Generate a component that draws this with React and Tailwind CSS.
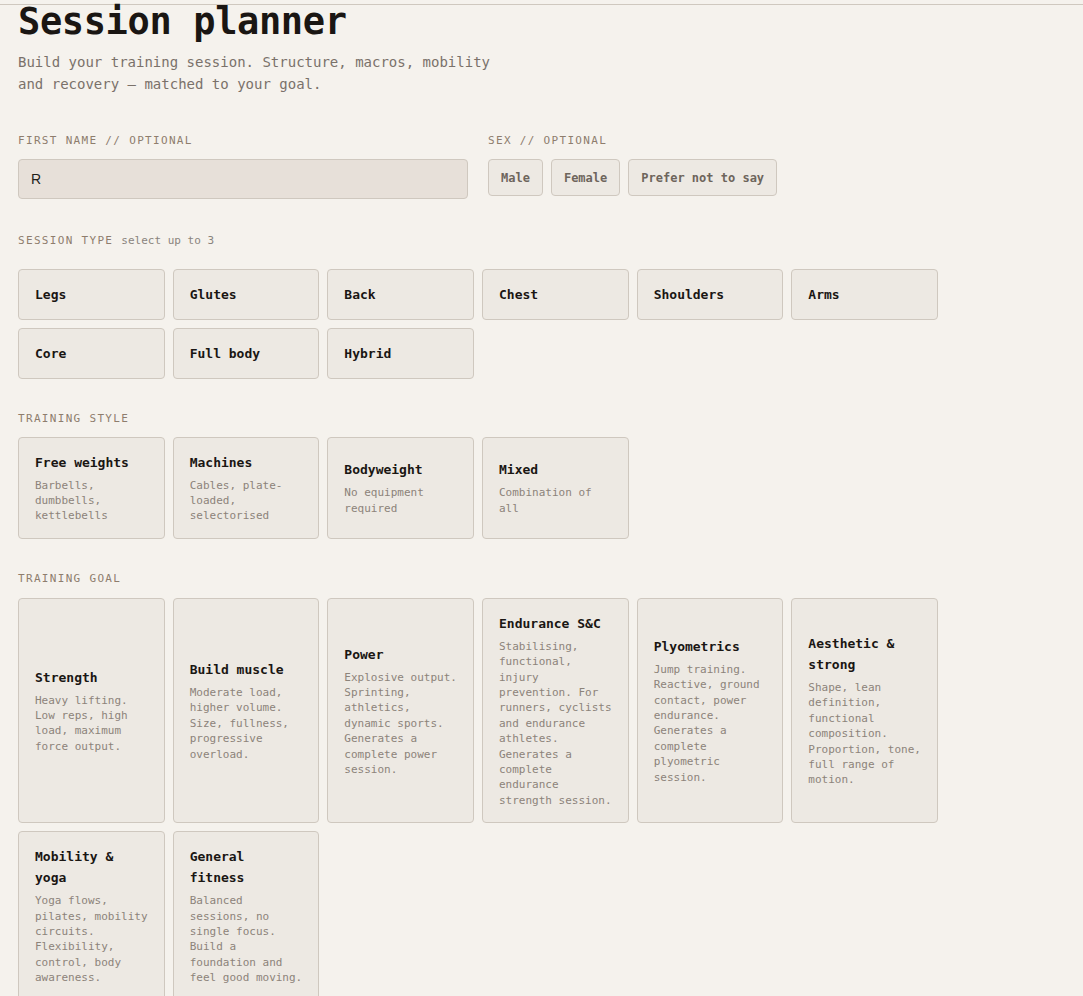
import { useState } from 'react';

const SESSION_TYPES = ['Legs', 'Glutes', 'Back', 'Chest', 'Shoulders', 'Arms', 'Core', 'Full body', 'Hybrid'];

const STYLES = [
  { name: 'Free weights', desc: 'Barbells, dumbbells, kettlebells' },
  { name: 'Machines', desc: 'Cables, plate-loaded, selectorised' },
  { name: 'Bodyweight', desc: 'No equipment required' },
  { name: 'Mixed', desc: 'Combination of all' },
];

const GOALS = [
  { name: 'Strength', desc: 'Heavy lifting. Low reps, high load, maximum force output.' },
  { name: 'Build muscle', desc: 'Moderate load, higher volume. Size, fullness, progressive overload.' },
  { name: 'Power', desc: 'Explosive output. Sprinting, athletics, dynamic sports. Generates a complete power session.' },
  { name: 'Endurance S&C', desc: 'Stabilising, functional, injury prevention. For runners, cyclists and endurance athletes. Generates a complete endurance strength session.' },
  { name: 'Plyometrics', desc: 'Jump training. Reactive, ground contact, power endurance. Generates a complete plyometric session.' },
  { name: 'Aesthetic & strong', desc: 'Shape, lean definition, functional composition. Proportion, tone, full range of motion.' },
  { name: 'Mobility & yoga', desc: 'Yoga flows, pilates, mobility circuits. Flexibility, control, body awareness.' },
  { name: 'General fitness', desc: 'Balanced sessions, no single focus. Build a foundation and feel good moving.' },
];

function Label({ children, className = '' }) {
  return (
    <div className={`text-[11px] leading-[15px] tracking-[0.12em] uppercase text-[#8e7d6d] ${className}`}>
      {children}
    </div>
  );
}

function OptionCard({ name, desc, onClick }) {
  return (
    <button
      onClick={onClick}
      className="min-h-[51px] flex flex-col justify-center text-left rounded-[4px] border border-[#cfc8bf] bg-[#ede9e3] px-4 py-[14px] hover:border-[#a89e92]"
    >
      <span className="text-[13px] leading-[21px] font-bold text-[#1a1613]">{name}</span>
      {desc && <span className="mt-[5px] text-[11px] leading-[15.4px] text-[#8c837a]">{desc}</span>}
    </button>
  );
}

export default function App() {
  const [name, setName] = useState('R');
  const [sex, setSex] = useState(null);
  const [types, setTypes] = useState([]);

  const toggleType = (t) =>
    setTypes((prev) => (prev.includes(t) ? prev.filter((x) => x !== t) : prev.length < 3 ? [...prev, t] : prev));

  return (
    <div className="min-h-screen bg-[#f5f2ed] font-['DejaVu_Sans_Mono',monospace]">
      <div className="h-[5px] border-b border-[#cfc8bf]" />
      <div className="max-w-[920px] ml-[18px] pb-10">
        <h1 className="text-[37px] leading-[34px] font-bold text-[#1a1613] tracking-[-0.01em]">Session planner</h1>
        <p className="mt-[12px] max-w-[480px] text-[14px] leading-[22px] text-[#7a716a]">
          Build your training session. Structure, macros, mobility and recovery — matched to your goal.
        </p>

        <div className="mt-[38px] grid grid-cols-2 gap-5">
          <div>
            <Label className="mb-[11px]">First name // optional</Label>
            <input
              value={name}
              onChange={(e) => setName(e.target.value)}
              className="w-full h-[40px] rounded-[4px] border border-[#cfc8bf] bg-[#e7e0d9] px-3 text-[14px] text-[#221e1a] font-['Liberation_Sans',sans-serif] outline-none"
            />
          </div>
          <div>
            <Label className="mb-[11px]">Sex // optional</Label>
            <div className="flex gap-2">
              {['Male', 'Female', 'Prefer not to say'].map((s) => (
                <button
                  key={s}
                  onClick={() => setSex(s)}
                  className={`h-[37px] px-3 rounded-[4px] border border-[#cfc8bf] bg-[#ede9e3] text-[12px] font-bold text-[#6e655c] ${sex === s ? 'border-[#6e655c]' : ''}`}
                >
                  {s}
                </button>
              ))}
            </div>
          </div>
        </div>

        <div className="mt-[34px] mb-[19px] flex items-baseline gap-2">
          <Label>Session type</Label>
          <span className="text-[11px] text-[#8a847d]">select up to 3</span>
        </div>
        <div className="grid grid-cols-6 gap-2">
          {SESSION_TYPES.map((t) => (
            <OptionCard key={t} name={t} onClick={() => toggleType(t)} />
          ))}
        </div>

        <Label className="mt-8 mb-[11px]">Training style</Label>
        <div className="grid grid-cols-6 gap-2">
          {STYLES.map((s) => (
            <OptionCard key={s.name} {...s} />
          ))}
        </div>

        <Label className="mt-8 mb-3">Training goal</Label>
        <div className="grid grid-cols-6 gap-2">
          {GOALS.map((g) => (
            <OptionCard key={g.name} {...g} />
          ))}
        </div>
      </div>
    </div>
  );
}
